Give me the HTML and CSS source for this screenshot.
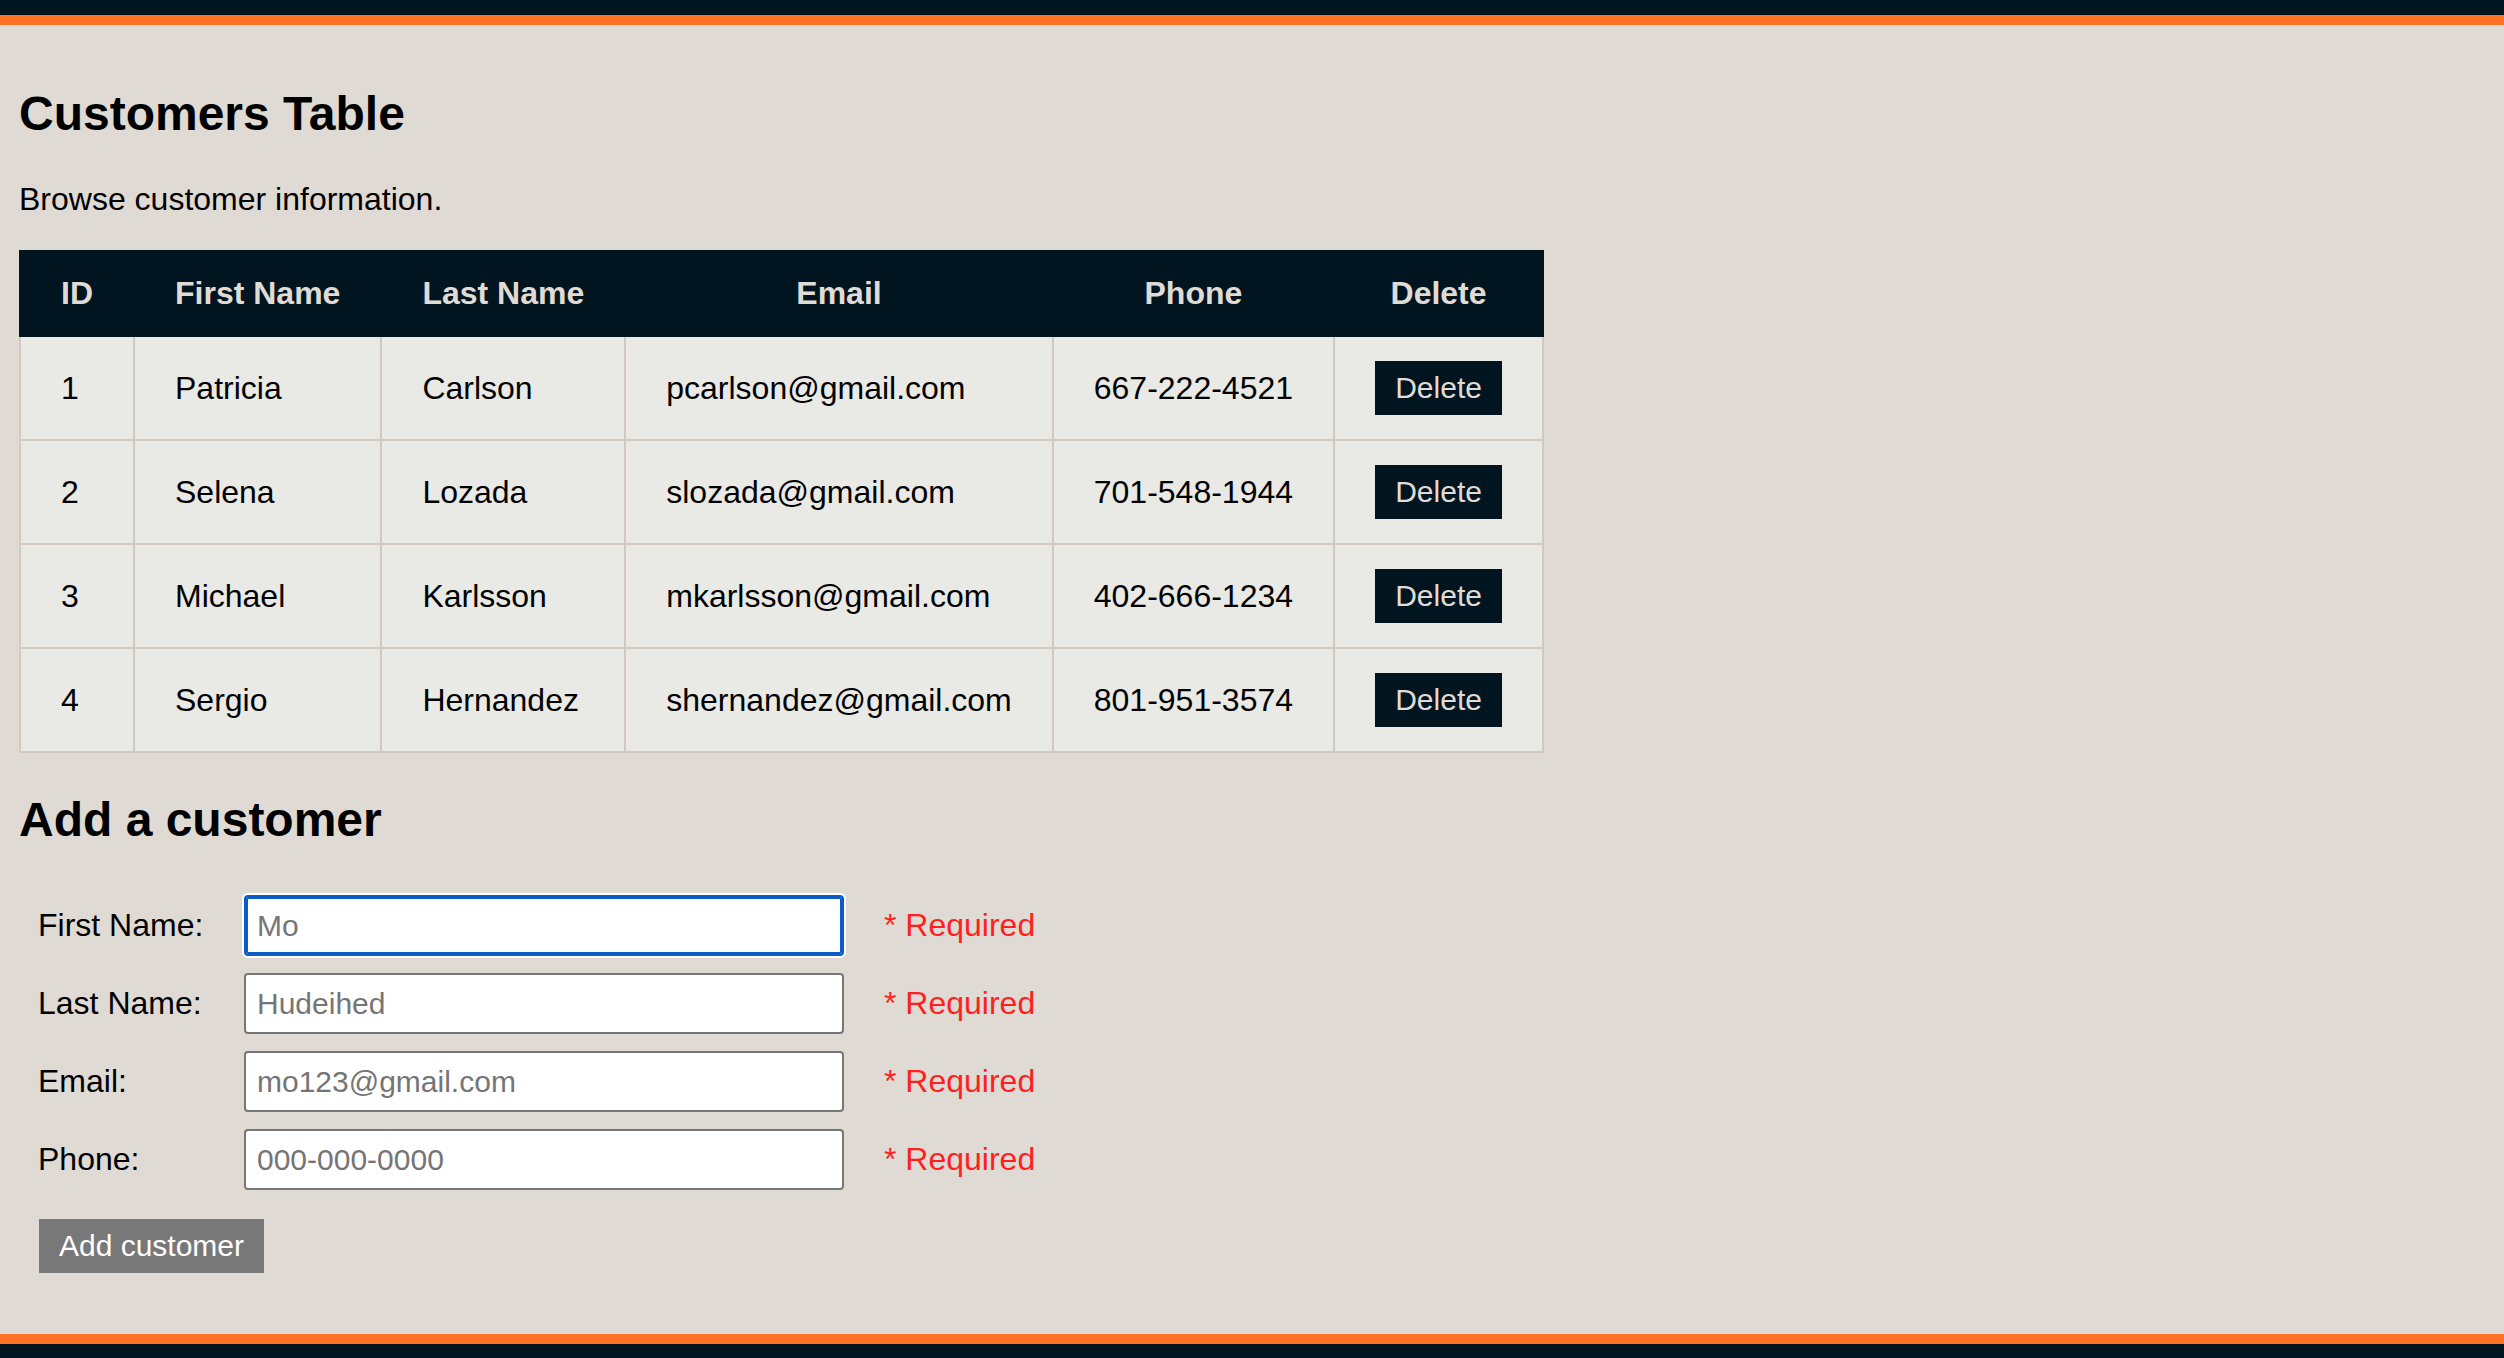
FILE: index.html
```html
<!DOCTYPE html>
<html lang="en">
<head>
<meta charset="utf-8">
<title>Customers</title>
<link rel="stylesheet" href="styles.css">
</head>
<body>
<header class="topbar"></header>
<main class="content">
  <h2 class="title">Customers Table</h2>
  <p class="lead">Browse customer information.</p>
  <table class="customers">
    <thead>
      <tr><th>ID</th><th>First Name</th><th>Last Name</th><th>Email</th><th>Phone</th><th>Delete</th></tr>
    </thead>
    <tbody>
      <tr><td>1</td><td>Patricia</td><td>Carlson</td><td>pcarlson@gmail.com</td><td>667-222-4521</td><td><button class="btn-delete">Delete</button></td></tr>
      <tr><td>2</td><td>Selena</td><td>Lozada</td><td>slozada@gmail.com</td><td>701-548-1944</td><td><button class="btn-delete">Delete</button></td></tr>
      <tr><td>3</td><td>Michael</td><td>Karlsson</td><td>mkarlsson@gmail.com</td><td>402-666-1234</td><td><button class="btn-delete">Delete</button></td></tr>
      <tr><td>4</td><td>Sergio</td><td>Hernandez</td><td>shernandez@gmail.com</td><td>801-951-3574</td><td><button class="btn-delete">Delete</button></td></tr>
    </tbody>
  </table>
  <h2 class="title title-form">Add a customer</h2>
  <form class="add-form">
    <div class="form-grid">
      <label class="form-label" for="fn">First Name:</label>
      <input class="form-input is-focused" id="fn" type="text" placeholder="Mo">
      <span class="required">* Required</span>
      <label class="form-label" for="ln">Last Name:</label>
      <input class="form-input" id="ln" type="text" placeholder="Hudeihed">
      <span class="required">* Required</span>
      <label class="form-label" for="em">Email:</label>
      <input class="form-input" id="em" type="text" placeholder="mo123@gmail.com">
      <span class="required">* Required</span>
      <label class="form-label" for="ph">Phone:</label>
      <input class="form-input" id="ph" type="text" placeholder="000-000-0000">
      <span class="required">* Required</span>
    </div>
    <button class="btn-add" type="button">Add customer</button>
  </form>
</main>
<footer class="bottombar"></footer>
</body>
</html>
```
FILE: styles.css
```css
html, body {
  margin: 0;
  padding: 0;
}
body {
  background: #dfdad4;
  color: #000;
  font-family: "Liberation Sans", Arial, sans-serif;
  font-size: 32px;
  min-height: 100vh;
  display: flex;
  flex-direction: column;
}
.topbar {
  height: 15px;
  background: #011520;
  border-bottom: 10px solid #ff7326;
  flex: none;
}
.content {
  flex: 1;
  padding: 21px 19px 0;
}
.title {
  font-size: 48px;
  font-weight: bold;
  margin: 40px 0;
  line-height: normal;
}
.title-form {
  margin-top: 39px;
  margin-bottom: 40px;
}
.lead {
  margin: 32px 0;
  line-height: normal;
}
.customers {
  border-collapse: collapse;
  margin: 0;
}
.customers th {
  background: #011520;
  color: #e0dbd5;
  font-weight: bold;
  text-align: center;
  padding: 23px 40px;
  border: 2px solid #011520;
  white-space: nowrap;
}
.customers td {
  background: #e9e9e5;
  border: 2px solid #d4c8bf;
  padding: 24px 40px;
  text-align: left;
  vertical-align: middle;
  white-space: nowrap;
}
.btn-delete {
  display: block;
  width: 127px;
  height: 54px;
  padding: 0;
  border: none;
  border-radius: 0;
  background: #011520;
  color: #e0dbd5;
  font-family: "Liberation Sans", Arial, sans-serif;
  font-size: 30px;
  text-align: center;
}
.add-form {
  padding: 8px 0 0 19px;
}
.form-grid {
  display: grid;
  grid-template-columns: 206px 600px auto;
  column-gap: 0;
  row-gap: 17px;
  align-items: center;
}
.form-label {
  font-size: 32px;
}
.form-input {
  box-sizing: border-box;
  width: 600px;
  height: 61px;
  border: 2px solid #767676;
  border-radius: 4px;
  background: #fff;
  padding: 0 11px;
  font-family: "Liberation Sans", Arial, sans-serif;
  font-size: 30px;
  color: #000;
  outline: none;
}
.form-input::placeholder {
  color: #757575;
  opacity: 1;
}
.form-input.is-focused {
  border-color: #0b5cc5;
  box-shadow: inset 0 0 0 2px #0b5cc5, 0 0 0 2px #ffffff;
}
.required {
  color: #ff1f1f;
  margin-left: 40px;
  font-size: 32px;
}
.btn-add {
  display: block;
  margin: 29px 0 0 1px;
  width: 225px;
  height: 54px;
  padding: 0;
  border: none;
  border-radius: 0;
  background: #787878;
  color: #ffffff;
  font-family: "Liberation Sans", Arial, sans-serif;
  font-size: 30px;
  text-align: center;
}
.bottombar {
  flex: none;
  height: 14px;
  background: #011520;
  border-top: 10px solid #ff7326;
}
```
